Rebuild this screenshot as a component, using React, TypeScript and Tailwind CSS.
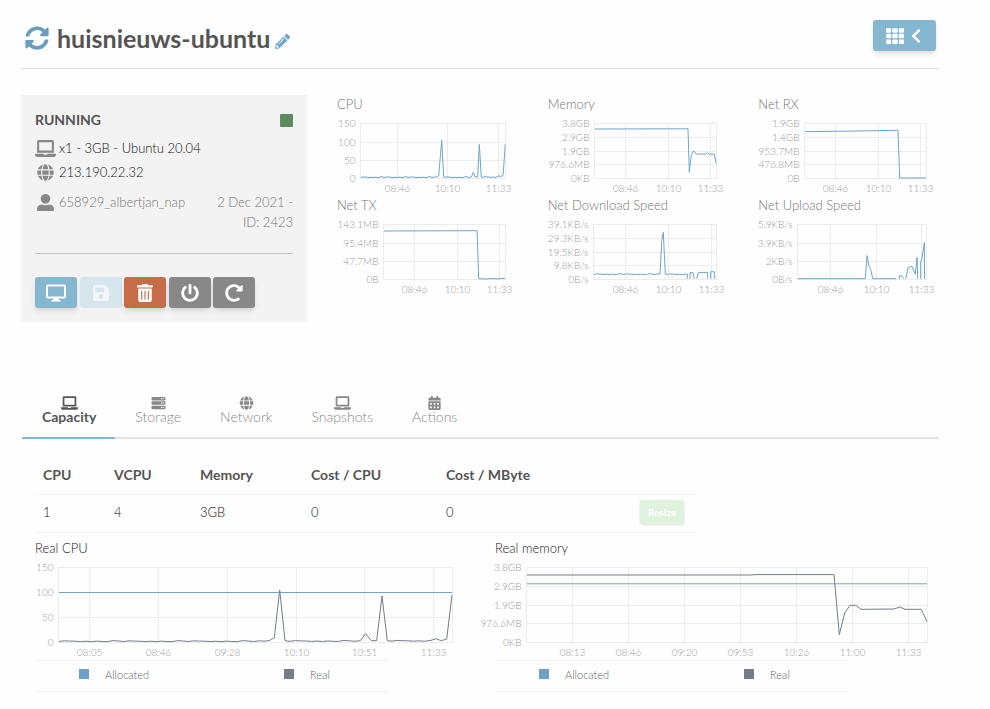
import React from "react";
import {
  FaSyncAlt,
  FaPencilAlt,
  FaTh,
  FaChevronLeft,
  FaLaptop,
  FaGlobe,
  FaUserAlt,
  FaSave,
  FaTrashAlt,
  FaPowerOff,
  FaRedoAlt,
  FaServer,
  FaCalendarAlt,
} from "react-icons/fa";

type Tick = [number, string];

interface Series {
  points: string[];
  color: string;
}

interface ChartProps {
  label: string;
  width: number;
  height: number;
  left: number;
  right: number;
  top: number;
  bottom: number;
  xTicks: Tick[];
  yTicks: Tick[];
  series: Series[];
}

const BLUE = "#6fa5cc";
const SLATE = "#747d88";

/* Monitor with an open screen and a short stand. */
function MonitorIcon() {
  return (
    <svg viewBox="0 0 20 18" width="20" height="18" aria-hidden="true">
      <rect x="1" y="1.5" width="18" height="12" rx="1.2" fill="none" stroke="currentColor" strokeWidth="2" />
      <path d="M8 14h4l.6 2H14a.8.8 0 0 1 0 1.600H6a.8.8 0 0 1 0-1.600h1.400z" fill="currentColor" />
    </svg>
  );
}

function Chart({ label, width, height, left, right, top, bottom, xTicks, yTicks, series }: ChartProps) {
  return (
    <svg role="img" aria-label={label} width={width} height={height} className="block overflow-visible">
      <g stroke="#ececec" strokeWidth="1" fill="none">
        {yTicks.map(([y]) => (
          <line key={y} x1={left} x2={right} y1={y} y2={y} />
        ))}
        {xTicks.map(([x]) => (
          <line key={x} x1={x} x2={x} y1={top} y2={bottom} />
        ))}
        <rect x={left} y={top} width={right - left} height={bottom - top} />
      </g>
      <g className="fill-[#999] text-[10px] font-light">
        {yTicks.map(([y, text]) => (
          <text key={text} x={left - 5} y={y + 3} textAnchor="end">
            {text}
          </text>
        ))}
        {xTicks.map(([x, text]) => (
          <text key={text} x={x} y={bottom + 13} textAnchor="middle">
            {text}
          </text>
        ))}
      </g>
      <g fill="none" strokeWidth="1" strokeLinejoin="round">
        {series.map((s) =>
          s.points.map((p) => <polyline key={p} points={p} stroke={s.color} />)
        )}
      </g>
    </svg>
  );
}

/* A nearly flat idle line with the small jitter of a quiet machine. */
function idle(from: number, to: number, y: number, step: number) {
  const jitter = [0.3, -0.4, -0.1, 0, 0.4, 0, 0.5, -0.1, 0.3, 0.4, -0.6, -0.2];
  const out: string[] = [];
  for (let x = from, i = 0; x <= to; x += step, i++) {
    out.push(`${x.toFixed(1)},${(y + jitter[i % jitter.length]).toFixed(1)}`);
  }
  return out.join(" ");
}

const xTicksAt = (a: number, b: number, c: number): Tick[] => [
  [a, "08:46"],
  [b, "10:10"],
  [c, "11:33"],
];

const fourRows = (a: string, b: string, c: string, d: string): Tick[] => [
  [7.5, a],
  [26.5, b],
  [44.5, c],
  [62.5, d],
];

const fiveRows = (a: string, b: string, c: string, d: string, e: string): Tick[] => [
  [7.5, a],
  [21.5, b],
  [35.5, c],
  [48.5, d],
  [62.5, e],
];

const miniCharts = [
  {
    title: "CPU",
    left: 23.5,
    xTicks: xTicksAt(60.5, 110.5, 161.5),
    yTicks: fourRows("150", "100", "50", "0"),
    points: [
      `${idle(24, 100, 61.2, 2)} 101.7,59.7 104.7,24 106.7,61 ${idle(108, 133, 61.2, 2)} 134.3,61 136.3,56.3 138,61 140.7,61 142.3,28.3 144.3,61 ${idle(146, 160, 61, 2)} 162,59.7 163.7,60.7 166,59.5 168.3,28.3`,
    ],
  },
  {
    title: "Memory",
    left: 46.5,
    xTicks: xTicksAt(77.5, 120.5, 162.5),
    yTicks: fiveRows("3.8GB", "2.9GB", "1.9GB", "976.6MB", "0KB"),
    points: [
      "47,13 140,12.8 141.3,56.3 143,40.7 145,35.3 146.3,35.3 148,38 158,38 159.7,36.7 161,38 166.3,38 168,47.3",
    ],
  },
  {
    title: "Net RX",
    left: 46.5,
    xTicks: xTicksAt(77.5, 120.5, 162.5),
    yTicks: fiveRows("1.9GB", "1.4GB", "953.7MB", "476.8MB", "0B"),
    points: ["47,15.7 120.3,14.7 140,14.3 141.7,62 168,62"],
  },
  {
    title: "Net TX",
    left: 46.5,
    xTicks: xTicksAt(77.5, 120.5, 162.5),
    yTicks: fourRows("143.1MB", "95.4MB", "47.7MB", "0B"),
    points: ["47,14 140,13.7 141.7,61.7 150,62 156,61.4 160,62 165,61.4 168,61.4"],
  },
  {
    title: "Net Download Speed",
    left: 45.5,
    xTicks: xTicksAt(77.5, 120.5, 163.5),
    yTicks: fiveRows("39.1KB/s", "29.3KB/s", "19.5KB/s", "9.8KB/s", "0B/s"),
    points: [
      `${idle(46, 111, 57.2, 2.5)} 112,57 113.7,24.7 115.3,15.3 117.3,57 ${idle(119, 138, 57.2, 2.5)} 139.3,57 139.3,61.7`,
      "142,61.7 142,55.7 145,55.7 146.3,61.7",
      "148.7,61.7 150,56 153,55.4 159.7,55.4 159.7,61.7",
      "162.7,61.7 162.7,54.7 166.3,54.7 166.3,61.7",
    ],
  },
  {
    title: "Net Upload Speed",
    left: 39.5,
    xTicks: xTicksAt(72.5, 118.5, 163.5),
    yTicks: fourRows("5.9KB/s", "3.9KB/s", "2KB/s", "0B/s"),
    points: [
      "40,61.7 107.3,61.7 109,38.7 111.3,50.3 113,53.3 114.7,61.7 138,61.7",
      "141.3,61.7 141.3,58.7 143.7,58.7 145.7,61.7",
      "147.7,61.7 150,50.7 154,49.3 157.3,57.3 159,40.3 159.7,61.7",
      "162.7,61.7 162.7,45 164,41.3 166.3,25.7 166.6,61.7",
    ],
  },
];

const realCpu: ChartProps = {
  label: "Real CPU",
  width: 418,
  height: 100,
  left: 23.5,
  right: 417.5,
  top: 7.5,
  bottom: 82.5,
  xTicks: [
    [54.5, "08:05"],
    [123.5, "08:46"],
    [192.5, "09:28"],
    [261.5, "10:10"],
    [329.5, "10:51"],
    [398.5, "11:33"],
  ],
  yTicks: [
    [7.5, "150"],
    [32.5, "100"],
    [57.5, "50"],
    [82.5, "0"],
  ],
  series: [
    { color: BLUE, points: ["24,32.5 417,32.5"] },
    {
      color: SLATE,
      points: [
        `${idle(24, 233, 81.2, 5.4)} 234,80.7 239.3,77.7 244.7,30 250,80.7 ${idle(255, 322, 81, 5.4)} 325.3,80.7 330.7,73.7 336.3,80.7 341.7,80.7 347,36 352.3,80.7 ${idle(357, 392, 80.8, 5.4)} 396,80.3 401,78.7 406.3,80.7 411.7,79 417,35`,
      ],
    },
  ],
};

const realMemory: ChartProps = {
  label: "Real memory",
  width: 433,
  height: 100,
  left: 31.5,
  right: 432.5,
  top: 7.5,
  bottom: 82.5,
  xTicks: [
    [77.5, "08:13"],
    [133.5, "08:46"],
    [189.5, "09:20"],
    [245.5, "09:53"],
    [301.5, "10:26"],
    [357.5, "11:00"],
    [413.5, "11:33"],
  ],
  yTicks: [
    [7.5, "3.8GB"],
    [26.5, "2.9GB"],
    [45.5, "1.9GB"],
    [63.5, "976.6MB"],
    [82.5, "0KB"],
  ],
  series: [
    { color: BLUE, points: ["32,23.8 432,23.8"] },
    {
      color: SLATE,
      points: [
        "32,15 255,15 262,14.6 339,14.6 344.3,74.7 349.7,53 355,45.3 360.7,45.3 366,49.3 399,49 404.7,47 410,49.3 426.3,49.3 432,61.7",
      ],
    },
  ],
};

const tabs = [
  { name: "Capacity", Icon: FaLaptop, active: true },
  { name: "Storage", Icon: FaServer, active: false },
  { name: "Network", Icon: FaGlobe, active: false },
  { name: "Snapshots", Icon: FaLaptop, active: false },
  { name: "Actions", Icon: FaCalendarAlt, active: false },
];

const actions = [
  { name: "Console", icon: <MonitorIcon />, tone: "bg-[#86b7d1]" },
  { name: "Save", icon: <FaSave className="size-[18px]" />, tone: "bg-[#d7e5ed]" },
  { name: "Delete", icon: <FaTrashAlt className="size-[18px]" />, tone: "bg-[#c66c49]" },
  { name: "Power", icon: <FaPowerOff className="size-[18px]" />, tone: "bg-[#888888]" },
  { name: "Restart", icon: <FaRedoAlt className="size-[18px]" />, tone: "bg-[#888888]" },
];

function Legend() {
  return (
    <ul className="grid h-8 w-[353px] grid-cols-[205px_1fr] items-center border-y border-[#f1f1f1] pb-0.5 pl-11 text-[11px] font-light text-[#666]">
      <li className="flex items-center gap-4">
        <span className="size-[10px] bg-[#6fa0c8]" />
        Allocated
      </li>
      <li className="flex items-center gap-4">
        <span className="size-[10px] bg-[#747d88]" />
        Real
      </li>
    </ul>
  );
}

function RealPanel(props: ChartProps) {
  return (
    <section>
      <h2 className="h-[21px] text-[13px] leading-[19px] font-light text-[#222]">{props.label}</h2>
      <Chart {...props} />
      <Legend />
    </section>
  );
}

export default function App() {
  return (
    <main className="min-h-screen bg-[#fefefe] pr-[51px] pl-[21px] font-['Lato',sans-serif] text-sm text-[#444]">
      <header className="flex h-[69px] items-start justify-between border-b border-[#dcdcdc] pt-5">
        <div className="flex h-9 items-center pl-1">
          <button aria-label="Refresh" className="text-[#6b9dbf]">
            <FaSyncAlt className="size-6" />
          </button>
          <h1 className="pl-2 text-[25px] leading-9 font-bold text-[#555]">huisnieuws-ubuntu</h1>
          <button aria-label="Rename" className="pt-1.5 pl-[5px] text-[#6fa5cc]">
            <FaPencilAlt className="size-[15px]" />
          </button>
        </div>
        <button
          aria-label="Show overview"
          className="mr-[3px] flex h-[31px] w-[63px] items-center justify-center gap-1 rounded-[3px] bg-[#86b7d1] text-white shadow-md"
        >
          <FaTh className="size-[18px]" />
          <FaChevronLeft className="size-4" />
        </button>
      </header>

      <div className="flex items-start gap-[30px] pt-[26px]">
        <section className="h-[227px] w-[286px] shrink-0 bg-[#f3f3f3] p-[14px] text-[13px]">
          <div className="flex h-[22px] items-center justify-between">
            <h2 className="text-sm font-bold text-[#555]">RUNNING</h2>
            <span className="size-[13px] rounded-[1px] bg-[#5d8a5e]" />
          </div>
          <div className="flex h-[34px] items-center gap-1 font-light text-[#111]">
            <span className="flex w-5 justify-center text-[#888]">
              <FaLaptop className="size-[21px] shrink-0" />
            </span>
            x1 - 3GB - Ubuntu 20.04
          </div>
          <div className="flex h-[14px] items-center gap-1 font-light text-[#111]">
            <span className="flex w-5 justify-center pl-px text-[#888]">
              <FaGlobe className="size-[17px]" />
            </span>
            213.190.22.32
          </div>
          <div className="flex items-start justify-between pt-[13px] leading-5 font-light text-[#777]">
            <span className="flex items-center gap-1">
              <span className="flex w-5 justify-center pl-px text-[#888]">
                <FaUserAlt className="size-[17px]" />
              </span>
              658929_albertjan_nap
            </span>
            <span className="w-20 text-right">2 Dec 2021 - ID: 2423</span>
          </div>
          <hr className="mt-[21px] border-[#c4c4c4]" />
          <div className="mt-[23px] flex w-[220px] justify-between">
            {actions.map(({ name, icon, tone }) => (
              <button
                key={name}
                aria-label={name}
                disabled={name === "Save"}
                className={`flex h-[31px] w-[42px] items-center justify-center rounded-[3px] text-white shadow-md disabled:text-white/70 disabled:shadow-none ${tone}`}
              >
                {icon}
              </button>
            ))}
          </div>
        </section>

        <div className="grid flex-1 grid-cols-3 gap-x-[30px]">
          {miniCharts.map((c) => (
            <section key={c.title}>
              <h3 className="h-[21px] text-[13px] leading-[19px] font-light text-[#777]">{c.title}</h3>
              <Chart
                label={c.title}
                width={169}
                height={80}
                left={c.left}
                right={168.5}
                top={7.5}
                bottom={62.5}
                xTicks={c.xTicks}
                yTicks={c.yTicks}
                series={[{ color: BLUE, points: c.points }]}
              />
            </section>
          ))}
        </div>
      </div>

      <nav role="tablist" className="mt-[65px] ml-px flex h-[52px] border-b-2 border-[#e3e3e3]">
        {tabs.map(({ name, Icon, active }) => (
          <button
            key={name}
            role="tab"
            aria-selected={active}
            className="-mb-0.5 flex flex-col items-center border-b-2 border-transparent pr-[19px] pl-5 font-light text-[#888] aria-selected:border-[#7fb8d3] aria-selected:font-bold aria-selected:text-[#555]"
          >
            <span className="flex h-[31px] items-center">
              <Icon className="h-[14px] w-[17px]" />
            </span>
            <span className="-mt-[11px] leading-5">{name}</span>
          </button>
        ))}
      </nav>

      <div className="pt-[17px] pl-[14px]">
        <table className="w-[662px] table-fixed text-left">
          <colgroup>
            <col className="w-[71px]" />
            <col className="w-[86px]" />
            <col className="w-[111px]" />
            <col className="w-[135px]" />
            <col />
            <col className="w-[100px]" />
          </colgroup>
          <thead>
            <tr className="h-[38px] border-b border-[#f1f1f1] font-bold text-[#555]">
              <th className="pl-2">CPU</th>
              <th className="pl-2">VCPU</th>
              <th className="pl-2">Memory</th>
              <th className="pl-2">Cost / CPU</th>
              <th className="pl-2">Cost / MByte</th>
              <th aria-label="Actions" />
            </tr>
          </thead>
          <tbody>
            <tr className="h-[38px] border-b border-[#f1f1f1] pb-0.5 text-[13px] font-light text-[#111]">
              <td className="pb-0.5 pl-2">1</td>
              <td className="pb-0.5 pl-2">4</td>
              <td className="pb-0.5 pl-2">3GB</td>
              <td className="pb-0.5 pl-2">0</td>
              <td className="pb-0.5 pl-2">0</td>
              <td className="pr-[13px] pb-0.5">
                <button
                  disabled
                  className="ml-auto block h-6 w-11 rounded-[3px] bg-[#dff2dd] text-[10px] font-bold text-white shadow-sm"
                >
                  Resize
                </button>
              </td>
            </tr>
          </tbody>
        </table>

        <div className="grid grid-cols-2 gap-4 pt-[6px]">
          <RealPanel {...realCpu} />
          <RealPanel {...realMemory} />
        </div>
      </div>
    </main>
  );
}
